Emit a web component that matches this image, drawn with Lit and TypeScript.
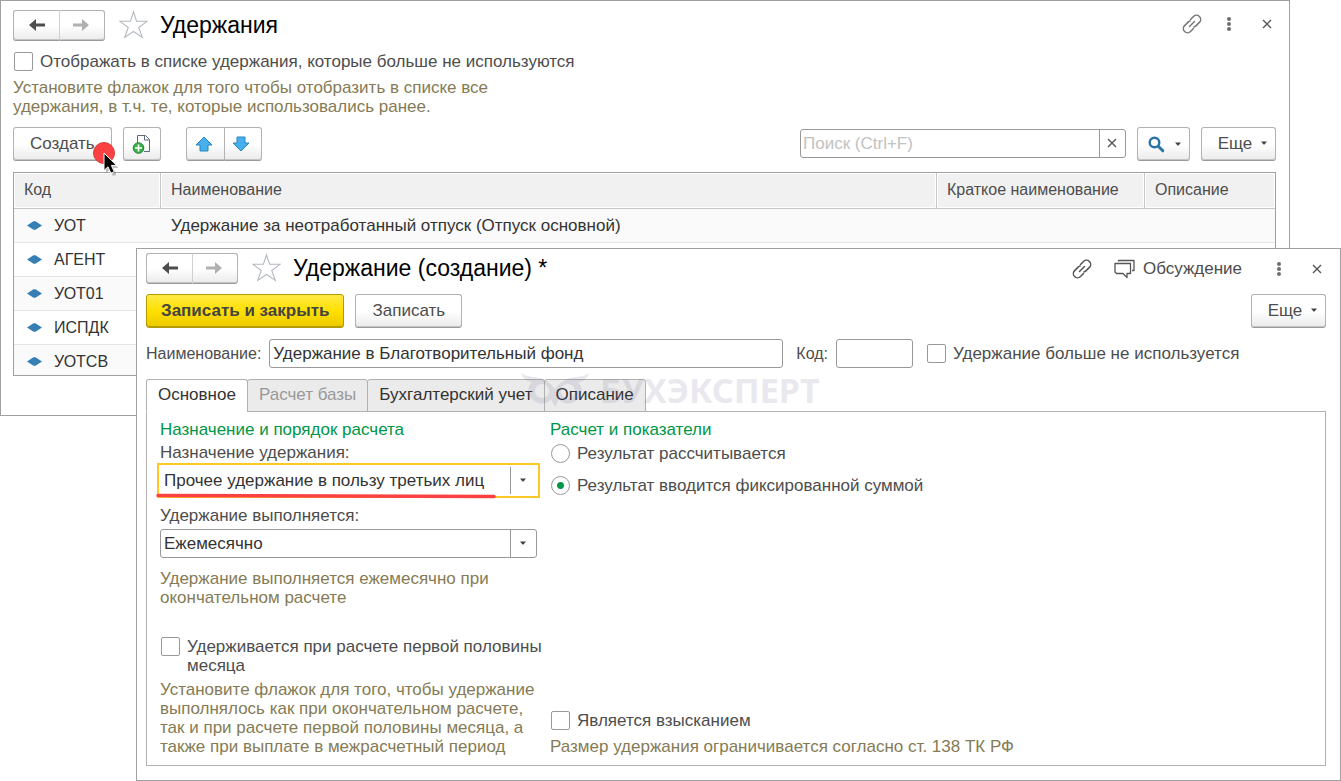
import { LitElement, html, css, svg } from "lit";
import { customElement } from "lit/decorators.js";
import { classMap } from "lit/directives/class-map.js";

const base = css`
  :host {
    display: block;
    font: 17px/19px "Liberation Sans", Arial, sans-serif;
    color: #4d4d4d;
  }
  * { box-sizing: border-box; }
  svg { display: block; flex: none; }
  button, input, select { font: inherit; color: inherit; margin: 0; }
  h1, p { margin: 0; }
  .btn {
    display: inline-flex;
    align-items: center;
    justify-content: center;
    height: 34px;
    padding: 0 16px 2px;
    border: 1px solid #b3b3b3;
    border-bottom-color: #9a9a9a;
    border-radius: 3px;
    background: linear-gradient(#fff 50%, #ebebeb);
    box-shadow: inset 0 -1px 0 #c4c4c4;
    white-space: nowrap;
  }
  .titlebar { display: flex; align-items: center; height: 31px; }
  .titlebar h1 {
    flex: 1;
    padding-bottom: 2px;
    font-size: 23px;
    line-height: 28px;
    font-weight: 400;
    color: #000;
    white-space: nowrap;
  }
  .star { margin: 0 12px 2px 14px; }
  .tool {
    display: flex;
    align-items: center;
    justify-content: center;
    gap: 8px;
    height: 28px;
    padding: 0;
    border: 0;
    background: none;
  }
  .more { gap: 9px; padding: 0 8px 2px 16px; }
  .check { display: flex; align-items: flex-start; gap: 7px; margin-left: 1px; }
  .check input {
    appearance: none;
    flex: none;
    width: 19px;
    height: 19px;
    border: 1px solid #999;
    border-radius: 2px;
    background: #fff;
  }
  .check input[type="radio"] { border-radius: 50%; }
  .check input[type="radio"]:checked {
    background: radial-gradient(circle at center, #009646 3px, #fff 4px);
  }
  .hint { color: #857b55; }
`;

const arrow = (color: string, right = false) => html`
  <svg width="18" height="14" viewBox="0 0 18 14" aria-hidden="true">
    ${right
      ? svg`<path d="M1 5.500h9V1l7 6-7 6V8.500H1z" fill=${color} />`
      : svg`<path d="M17 5.500H8V1L1 7l7 6V8.500h9z" fill=${color} />`}
  </svg>`;

const star = html`
  <svg class="star" width="29" height="29" viewBox="0 0 30 30" fill="none" stroke="#b4b9c0" stroke-width="1.100">
    <path d="M15 1.800l3.200 9.800 10.800.1-8.600 6.400 3.700 10.300L15 22.200l-9.100 6.200 3.700-10.300L1 11.700l10.800-.1z" />
  </svg>`;

const link = (color: string) => html`
  <svg width="22" height="22" viewBox="0 0 22 22" fill="none" stroke=${color} stroke-width="1.500" stroke-linecap="round">
    <path d="M9.500 6.500l3-3a4 4 0 0 1 5.900 5.900l-3.500 3.500c-.6.600-1.300.900-2 1" />
    <path d="M12.500 15.500l-3 3a4 4 0 0 1-5.900-5.900l3.500-3.500c.600-.600 1.300-.900 2-1" />
    <path d="M8.500 13.500l5-5" />
  </svg>`;

const dots = html`
  <svg width="6" height="16" viewBox="0 0 6 16" fill="#6e6e6e">
    <circle cx="3" cy="3" r="2" /><circle cx="3" cy="8" r="2" /><circle cx="3" cy="13" r="2" />
  </svg>`;

const cross = html`
  <svg width="10" height="10" viewBox="0 0 10 10" fill="none" stroke="#555" stroke-width="1.400">
    <path d="M1 1l8 8M9 1L1 9" />
  </svg>`;

const caret = html`
  <svg width="6" height="4" viewBox="0 0 6 4" fill="#444"><path d="M0 .500h6L3.500 3.500h-1z" /></svg>`;

@customElement("history-nav")
class HistoryNav extends LitElement {
  static styles = [
    base,
    css`
      :host { flex: none; }
      .pair { display: flex; }
      .btn { width: 47px; height: 31px; padding: 0 0 1px 1px; }
      .btn:first-child { border-radius: 3px 0 0 3px; border-right-color: #d0d0d0; }
      .btn:last-child { width: 46px; margin-left: -1px; border-left-color: #d0d0d0; border-radius: 0 3px 3px 0; padding: 0 3px 1px 0; }
    `,
  ];
  render() {
    return html`<div class="pair">
      <button class="btn" aria-label="Назад">${arrow("#4d4d4d")}</button>
      <button class="btn" aria-label="Вперед">${arrow("#b0b0b0", true)}</button>
    </div>`;
  }
}

@customElement("deduction-list")
class DeductionList extends LitElement {
  static styles = [
    base,
    css`
      .window {
        border: 1px solid #a0a0a0;
        background: #fff;
        padding: 9px 13px 39px 12px;
      }
      .window > .check { margin-top: 11px; }
      .window > .hint { margin-top: 7px; max-width: 490px; }
      .tool { padding-bottom: 4px; }
      .link { width: 34px; margin-right: 3px; }
      .menu { width: 34px; margin-right: 4px; }
      .close { width: 34px; margin-right: -8px; }
      .bar { display: flex; align-items: center; margin-top: 11px; }
      .create { position: relative; }
      .pointer { position: absolute; left: 77px; top: 11px; pointer-events: none; }
      .icon { width: 38px; padding: 0; margin-left: 11px; }
      .pair { display: flex; margin-left: 25px; }
      .pair .btn { width: 39px; padding: 0 2px 0 0; }
      .pair .btn:first-child { border-radius: 3px 0 0 3px; }
      .pair .btn:last-child { width: 38px; margin-left: -1px; border-radius: 0 3px 3px 0; padding-right: 4px; }
      .search {
        display: flex;
        width: 326px;
        height: 29px;
        margin: 0 11px 2px auto;
        border: 1px solid #999;
        border-radius: 3px;
      }
      .search input { flex: 1; min-width: 0; padding: 0 2px; border: 0; background: none; outline: 0; }
      .search input::placeholder { color: #c2c2c2; opacity: 1; }
      .search button { width: 26px; border: 0; border-left: 1px solid #999; background: none; padding: 0 7px; }
      .find { width: 53px; padding: 0 8px 0 10px; justify-content: space-between; margin-right: 11px; }
      .bar > .more { width: 75px; }
      .frame { margin-top: 11px; height: 204px; overflow: hidden; border: 1px solid #a0a0a0; }
      table { width: 100%; table-layout: fixed; border-collapse: separate; border-spacing: 0; }
      th, td { text-align: left; font-weight: 400; padding: 0 10px; white-space: nowrap; }
      th {
        height: 36px;
        padding-bottom: 3px;
        font-size: 16px;
        background: #f1f1f1;
        border-right: 1px solid #c8c8c8;
        border-bottom: 1px solid #c8c8c8;
        box-shadow: inset 0 0 0 1px #fff;
      }
      th:last-child { border-right: 0; }
      td { height: 34px; color: #333; border-bottom: 1px solid #e4e4e4; }
      tr:nth-child(odd) td { background: #fafafa; }
      .code { width: 147px; }
      .short { width: 208px; }
      .about { width: 130px; }
      .key { display: flex; align-items: center; gap: 12px; padding-left: 3px; font-size: 16px; }
    `,
  ];

  private rows = [
    ["УОТ", "Удержание за неотработанный отпуск (Отпуск основной)"],
    ["АГЕНТ", ""],
    ["УОТ01", ""],
    ["ИСПДК", ""],
    ["УОТСВ", ""],
  ];

  private vertical(down: boolean) {
    return html`<svg width="18" height="16" viewBox="0 0 18 16">
      <path d=${down ? "M5 1h8v6h4L9 15 1 7h4z" : "M5 15h8V9h4L9 1 1 9h4z"}
        fill="#46b0ee" stroke="#2b86bd" stroke-linejoin="round" />
    </svg>`;
  }

  render() {
    return html`<section class="window">
      <header class="titlebar">
        <history-nav></history-nav>
        ${star}
        <h1>Удержания</h1>
        <button class="tool link" aria-label="Ссылка">${link("#777")}</button>
        <button class="tool menu" aria-label="Меню">${dots}</button>
        <button class="tool close" aria-label="Закрыть">${cross}</button>
      </header>
      <label class="check"><input type="checkbox" />Отображать в списке удержания, которые больше не используются</label>
      <p class="hint">Установите флажок для того чтобы отобразить в списке все удержания, в т.ч. те, которые использовались ранее.</p>
      <div class="bar">
        <button class="btn create">Создать
          <svg class="pointer" width="32" height="38" viewBox="0 0 32 38">
            <circle cx="13" cy="14" r="10.500" fill="#fb4141" stroke="#d83a3a" />
            <path d="M15 17v17l4-3.500 3 6.500 3.500-1.500-3-6.500h5z" fill="#000" opacity=".25" />
            <path d="M13 14v17.500l4-3.700 2.800 6.400 3.400-1.500-2.800-6.300h5.300z" fill="#000" stroke="#fff" />
          </svg>
        </button>
        <button class="btn icon" aria-label="Создать копированием">
          <svg width="20" height="20" viewBox="0 0 20 20">
            <path d="M5.500 9V1.500h8l4 4v12H12M12.500 1.500v4.500h5" fill="none" stroke="#5d6b7a" />
            <circle cx="6.500" cy="14" r="5.300" fill="#3cb04a" stroke="#23853a" />
            <path d="M3 14h7M6.500 10.500v7" stroke="#fff" stroke-width="1.600" />
          </svg>
        </button>
        <div class="pair">
          <button class="btn" aria-label="Переместить вверх">${this.vertical(false)}</button>
          <button class="btn" aria-label="Переместить вниз">${this.vertical(true)}</button>
        </div>
        <div class="search">
          <input type="text" placeholder="Поиск (Ctrl+F)" aria-label="Поиск" />
          <button aria-label="Очистить">${cross}</button>
        </div>
        <button class="btn find" aria-label="Найти">
          <svg width="17" height="17" viewBox="0 0 17 17" fill="none" stroke="#2a73a8">
            <circle cx="6.500" cy="6.500" r="4.800" stroke-width="2.400" />
            <path d="M10.500 10.500l4.300 4.300" stroke-width="3" stroke-linecap="round" />
          </svg>
          ${caret}
        </button>
        <button class="btn more">Еще ${caret}</button>
      </div>
      <div class="frame">
        <table>
          <thead>
            <tr>
              <th class="code">Код</th>
              <th>Наименование</th>
              <th class="short">Краткое наименование</th>
              <th class="about">Описание</th>
            </tr>
          </thead>
          <tbody>
            ${this.rows.map(([code, name]) => html`<tr>
              <td><span class="key">
                <svg width="15" height="9" viewBox="0 0 15 9"><path d="M0 4.500L6.500.300h2L15 4.500 8.500 8.700h-2z" fill="#357fb5" /></svg>
                ${code}</span></td>
              <td>${name}</td>
              <td></td>
              <td></td>
            </tr>`)}
          </tbody>
        </table>
      </div>
    </section>`;
  }
}

@customElement("deduction-form")
class DeductionForm extends LitElement {
  static styles = [
    base,
    css`
      .window {
        position: relative;
        border: 1px solid #a0a0a0;
        background: #fff;
        padding: 4px 14px 14px 9px;
      }
      .link { width: 34px; margin-right: 15px; }
      .menu { width: 34px; margin: 0 4px 0 20px; }
      .close { width: 34px; margin-right: -8px; }
      .actions { display: flex; gap: 11px; margin-top: 10px; }
      .primary {
        padding: 0 14px 2px;
        font-weight: 700;
        color: #444;
        border-color: #b39b00;
        background: linear-gradient(#ffe946, #ffe000 50%, #ecc900);
        box-shadow: inset 0 -1px 0 #b39b00;
      }
      .actions .more { width: 75px; margin-left: auto; }
      .fields { display: flex; align-items: center; margin-top: 11px; }
      .side { font-size: 16px; }
      .text {
        height: 29px;
        padding: 0 3px;
        border: 1px solid #999;
        border-radius: 3px;
        color: #333;
        background: #fff;
      }
      .name { width: 514px; margin: 0 13px 0 8px; }
      .number { width: 77px; margin: 0 13px 0 8px; }
      .tabs { display: flex; margin-top: 11px; position: relative; z-index: 1; }
      .tab {
        height: 33px;
        padding: 0 11px 2px;
        margin-right: -1px;
        border: 1px solid #b0b0b0;
        border-radius: 3px 3px 0 0;
        background: #ebebeb;
        color: #333;
        white-space: nowrap;
      }
      .tab.active { background: #fff; border-bottom-color: #fff; }
      .tab:disabled { color: #999; }
      .panel {
        display: grid;
        grid-template-columns: 377px 1fr;
        column-gap: 13px;
        margin-top: -1px;
        padding: 8px 13px 9px;
        border: 1px solid #b0b0b0;
      }
      .column { display: flex; flex-direction: column; }
      .group { color: #009646; }
      .caption { margin: 4px 0; }
      .combo { display: grid; position: relative; height: 29px; border: 1px solid #999; border-radius: 3px; }
      .combo.focused { border-color: #fff; outline: 2px solid #fbc926; outline-offset: 1px; border-radius: 0; }
      .combo select {
        grid-area: 1 / 1;
        appearance: none;
        border: 0;
        outline: 0;
        background: none;
        color: #333;
        padding: 0 28px 0 3px;
      }
      .drop {
        grid-area: 1 / 1;
        justify-self: end;
        width: 26px;
        padding: 11px 0 0 9px;
        border-left: 1px solid #999;
        pointer-events: none;
      }
      .underline { position: absolute; left: -5px; bottom: -5px; pointer-events: none; }
      .second { margin-top: 11px; }
      .monthly { margin-top: 11px; }
      .half { margin-top: 30px; margin-right: -8px; }
      .column .note { margin-top: 5px; }
      .radios { display: grid; gap: 13px; margin-top: 5px; }
      .penalty { margin-top: auto; margin-bottom: 7px; }
      .mark {
        position: absolute;
        left: 384px;
        top: 117px;
        z-index: 2;
        display: flex;
        align-items: center;
        gap: 11px;
        font: 700 34px/48px "Noto Sans", sans-serif;
        color: #5a5882;
        opacity: 0.13;
        pointer-events: none;
      }
    `,
  ];

  private tabs = [
    { title: "Основное", active: true, disabled: false },
    { title: "Расчет базы", active: false, disabled: true },
    { title: "Бухгалтерский учет", active: false, disabled: false },
    { title: "Описание", active: false, disabled: false },
  ];

  render() {
    return html`<section class="window">
      <header class="titlebar">
        <history-nav></history-nav>
        ${star}
        <h1>Удержание (создание) *</h1>
        <button class="tool link" aria-label="Ссылка">${link("#555")}</button>
        <button class="tool">
          <svg width="21" height="20" viewBox="0 0 21 20" fill="none" stroke="#555" stroke-width="1.300" stroke-linejoin="round">
            <path d="M4.500 2.500v-1H20v10h-2" />
            <path d="M1 4.500h15.500v10H13v4l-4-4H2.500L1 13z" />
          </svg>
          Обсуждение
        </button>
        <button class="tool menu" aria-label="Меню">${dots}</button>
        <button class="tool close" aria-label="Закрыть">${cross}</button>
      </header>
      <div class="actions">
        <button class="btn primary">Записать и закрыть</button>
        <button class="btn">Записать</button>
        <button class="btn more">Еще ${caret}</button>
      </div>
      <div class="fields">
        <label class="side" for="name">Наименование:</label>
        <input id="name" class="text name" type="text" value="Удержание в Благотворительный фонд" />
        <label class="side" for="number">Код:</label>
        <input id="number" class="text number" type="text" />
        <label class="check"><input type="checkbox" />Удержание больше не используется</label>
      </div>
      <div class="tabs" role="tablist">
        ${this.tabs.map((t) => html`<button role="tab" aria-selected=${t.active ? "true" : "false"}
          class=${classMap({ tab: true, active: t.active })} ?disabled=${t.disabled}>${t.title}</button>`)}
      </div>
      <div class="panel" role="tabpanel">
        <div class="column">
          <div class="group">Назначение и порядок расчета</div>
          <label class="caption" for="purpose">Назначение удержания:</label>
          <div class="combo focused">
            <select id="purpose"><option>Прочее удержание в пользу третьих лиц</option></select>
            <span class="drop">${caret}</span>
            <svg class="underline" width="340" height="6" viewBox="0 0 340 6">
              <path d="M2 2.500L338 3.500" stroke="#fb4141" stroke-width="3.500" stroke-linecap="round" />
            </svg>
          </div>
          <label class="caption second" for="period">Удержание выполняется:</label>
          <div class="combo">
            <select id="period"><option>Ежемесячно</option></select>
            <span class="drop">${caret}</span>
          </div>
          <p class="hint monthly">Удержание выполняется ежемесячно при окончательном расчете</p>
          <label class="check half"><input type="checkbox" />Удерживается при расчете первой половины месяца</label>
          <p class="hint note">Установите флажок для того, чтобы удержание выполнялось как при окончательном расчете, так и при расчете первой половины месяца, а также при выплате в межрасчетный период</p>
        </div>
        <div class="column">
          <div class="group">Расчет и показатели</div>
          <div class="radios">
            <label class="check"><input type="radio" name="mode" />Результат рассчитывается</label>
            <label class="check"><input type="radio" name="mode" checked />Результат вводится фиксированной суммой</label>
          </div>
          <label class="check penalty"><input type="checkbox" />Является взысканием</label>
          <p class="hint">Размер удержания ограничивается согласно ст. 138 ТК РФ</p>
        </div>
      </div>
      <div class="mark" aria-hidden="true">
        <svg width="68" height="34" viewBox="0 0 68 34" fill="none" stroke="currentColor" stroke-width="5">
          <path d="M0 0c6 5 17 3 24 7 4 2 7 5 10 9 3-4 6-7 10-9 7-4 18-2 24-7-2 6-6 9-11 9a12 12 0 0 1-1 18c-7 6-15 4-18-1l-4 8-4-8c-3 5-11 7-18 1a12 12 0 0 1-1-18C6 9 2 6 0 0z
            M21 11a7 7 0 1 0 .1 0z M47 11a7 7 0 1 0 .1 0z"
            fill="currentColor" fill-rule="evenodd" stroke="none" />
        </svg>
        БУХЭКСПЕРТ
      </div>
    </section>`;
  }
}

@customElement("app-root")
class AppRoot extends LitElement {
  static styles = css`
    :host { display: grid; min-height: 100vh; background: #fff; }
    deduction-list { grid-area: 1 / 1; align-self: start; margin-right: 51px; }
    deduction-form { grid-area: 1 / 1; align-self: start; margin: 248px 0 0 136px; }
  `;
  render() {
    return html`<deduction-list></deduction-list><deduction-form></deduction-form>`;
  }
}
